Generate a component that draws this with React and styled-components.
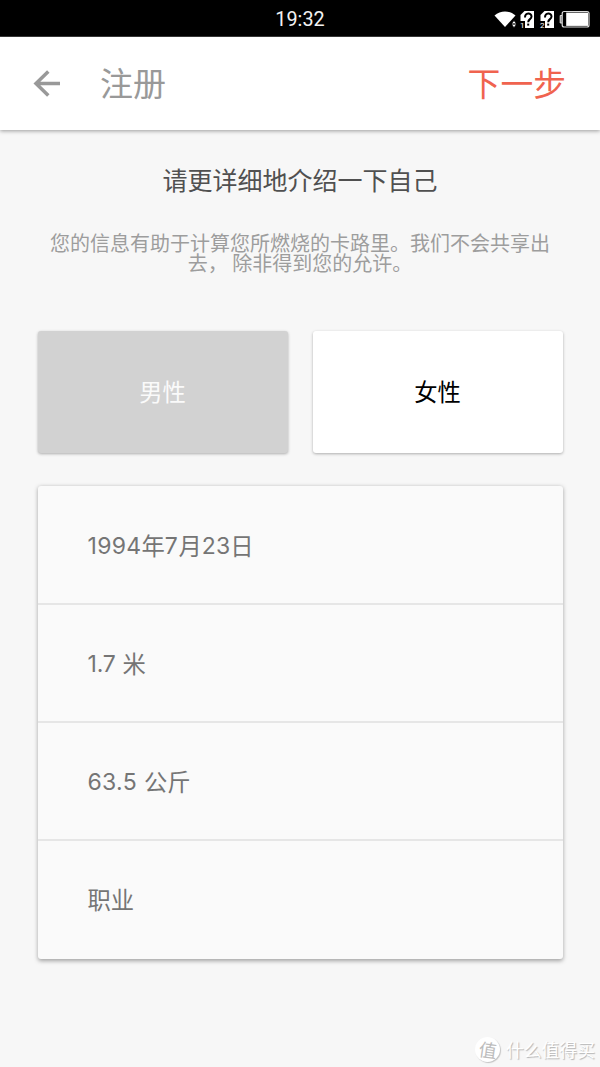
import React from "react";
import styled, { createGlobalStyle } from "styled-components";

const GlobalStyle = createGlobalStyle`
  * { box-sizing: border-box; }
  body {
    margin: 0;
    background: #f7f7f7;
    font-family: "Noto Sans CJK SC", sans-serif;
  }
`;

const Screen = styled.div`
  height: 1067px;
  display: flex;
  flex-direction: column;
  overflow: hidden;
  background: #f7f7f7;
`;

const StatusBar = styled.div`
  height: 37px;
  flex: none;
  display: grid;
  grid-template-columns: 1fr auto 1fr;
  align-items: center;
  background: #000;
  border-bottom: 1px solid #3c3c3c;
`;

const Clock = styled.span`
  grid-column: 2;
  font: 400 19.8px/36px Roboto, sans-serif;
  color: #f2f2f2;
  padding-top: 2px;
`;

const StatusIcons = styled.svg`
  justify-self: end;
  width: 120px;
  height: 36px;
`;

const AppBar = styled.header`
  height: 93px;
  flex: none;
  display: flex;
  align-items: center;
  padding: 0 34px 0 33px;
  background: #fff;
  box-shadow: 0 1px 4px rgba(0, 0, 0, 0.38);
`;

const BackIcon = styled.svg`
  width: 28px;
  height: 28px;
  margin-right: 39px;
`;

const Title = styled.h1`
  margin: 0;
  flex: 1;
  padding-bottom: 3px;
  font-size: 33px;
  line-height: 48px;
  font-weight: 400;
  color: #999;
`;

const NextButton = styled.button`
  border: 0;
  padding: 0 0 3px;
  background: none;
  font: inherit;
  font-size: 32.8px;
  line-height: 48px;
  color: #f0634f;
`;

const Content = styled.main`
  padding: 30px 37.5px 0;
`;

const Heading = styled.h2`
  margin: 0;
  font-size: 25px;
  line-height: 38px;
  font-weight: 400;
  text-align: center;
  color: #505050;
`;

const Intro = styled.p`
  margin: 35px 0 0;
  font-size: 20px;
  line-height: 20px;
  text-align: center;
  white-space: pre;
  color: #9d9d9d;
`;

const GenderRow = styled.div`
  display: grid;
  grid-template-columns: 1fr 1fr;
  gap: 25px;
  margin-top: 58.4px;
`;

const GenderButton = styled.button`
  height: 121.5px;
  border: 0;
  border-radius: 3px;
  padding: 0 0 2px;
  font: inherit;
  font-size: 23.3px;
  color: ${(p) => (p.$selected ? "#fafafa" : "#000")};
  background: ${(p) => (p.$selected ? "#d2d2d2" : "#fff")};
  box-shadow: 0 1px 3px rgba(0, 0, 0, 0.3);
`;

const Card = styled.section`
  margin: 33.6px 0 0;
  border-radius: 3px;
  background: #fafafa;
  box-shadow: 0 1.5px 4px rgba(0, 0, 0, 0.35);
`;

const Field = styled.div`
  height: 118.2px;
  display: flex;
  align-items: center;
  padding: 0 50px 2px;
  font-size: 23.3px;
  line-height: 34px;
  white-space: pre;
  color: #757575;

  &:not(:last-child) {
    border-bottom: 2px solid #e6e6e6;
    padding-bottom: 0;
  }
`;

const Digits = styled.span`
  font-family: Inter, sans-serif;
  font-size: 23px;
  padding-top: 2px;
  letter-spacing: ${(p) => p.$tracking || 0}px;
  margin-right: ${(p) => p.$after || 0}px;
`;

const Watermark = styled.footer`
  position: absolute;
  left: 475px;
  top: 1035px;
  display: flex;
  align-items: center;
  gap: 6px;
  font-size: 17.8px;
  line-height: 28px;
  color: #fff;
  white-space: nowrap;
  text-shadow: 1px 1px 1px #b4b4b4;
`;

const Seal = styled.span`
  width: 25px;
  height: 25px;
  border-radius: 50%;
  display: flex;
  align-items: center;
  justify-content: center;
  background: #fff;
  color: #bcbcbc;
  font-size: 18px;
  text-shadow: none;
  box-shadow: 1px 1px 1px #c4c4c4;
`;

const SealMark = styled.span`
  transform: rotate(8deg);
`;

function SimIcon({ x, slot }) {
  return (
    <g>
      <path d={`M${x + 4} 10H${x + 13.5}V27H${x}V14Z`} fill="#fff" />
      <path
        d={`M${x + 4.5} 16.5C${x + 4.5} 11.3 ${x + 11} 11.3 ${x + 11} 15.5C${x + 11} 18.3 ${x + 7.7} 18 ${x + 7.7} 21.3`}
        fill="none"
        stroke="#000"
        strokeWidth="2"
      />
      <rect x={x + 6.7} y="22.6" width="2" height="2" />
      <path d={`M${x - 0.5} 20H${x + 4.5}V27.5H${x - 0.5}Z`} />
      <text x={x - 0.4} y="27" fill="#fff" fontFamily="Roboto, sans-serif" fontSize="8">
        {slot}
      </text>
    </g>
  );
}

export default function App() {
  return (
    <Screen>
      <GlobalStyle />
      <StatusBar>
        <Clock>19:32</Clock>
        <StatusIcons viewBox="0 0 120 36">
          <path d="M14.5 14.5C20.5 9 29.5 9 35.5 14.5L25 26Z" fill="#fff" />
          <path d="M31 23L34 19.4L37 23L34 26.8Z" fill="#fff" stroke="#000" strokeWidth="1" />
          <path d="M31 23H37" stroke="#000" strokeWidth="1.2" />
          <SimIcon x={40.5} slot="1" />
          <SimIcon x={60.5} slot="2" />
          <rect x="82.2" y="10.5" width="26.8" height="15.5" rx="2" fill="none" stroke="#ddd" strokeWidth="1.2" />
          <path d="M82 14.5H80.2V22H82" fill="#999" stroke="#ddd" />
          <rect x="86.2" y="11.6" width="21.8" height="13.3" fill="#fff" />
        </StatusIcons>
      </StatusBar>
      <AppBar>
        <BackIcon viewBox="0 0 28 28" fill="none" stroke="#999" strokeWidth="3.5">
          <path d="M27 13.5H3M15.3 1.5L3 13.5L15.3 25.5" />
        </BackIcon>
        <Title>注册</Title>
        <NextButton>下一步</NextButton>
      </AppBar>
      <Content>
        <Heading>请更详细地介绍一下自己</Heading>
        <Intro>{"您的信息有助于计算您所燃烧的卡路里。我们不会共享出\n去， 除非得到您的允许。"}</Intro>
        <GenderRow>
          <GenderButton $selected>男性</GenderButton>
          <GenderButton>女性</GenderButton>
        </GenderRow>
        <Card>
          <Field>
            <Digits $tracking={0.3}>1994</Digits>年<Digits $tracking={0.6}>7</Digits>月
            <Digits $tracking={0.2}>23</Digits>日
          </Field>
          <Field>
            <Digits $tracking={-0.2} $after={7}>1.7</Digits>米
          </Field>
          <Field>
            <Digits $tracking={0.3} $after={7}>63.5</Digits>公斤
          </Field>
          <Field>职业</Field>
        </Card>
      </Content>
      <Watermark>
        <Seal>
          <SealMark>值</SealMark>
        </Seal>
        什么值得买
      </Watermark>
    </Screen>
  );
}
